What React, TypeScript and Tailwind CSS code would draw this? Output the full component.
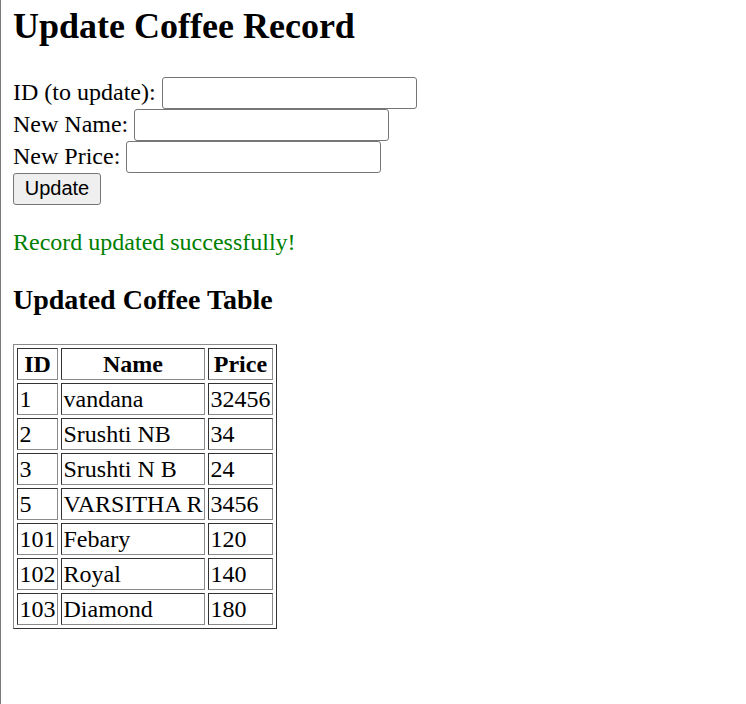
const coffees = [
  { id: 1, name: 'vandana', price: 32456 },
  { id: 2, name: 'Srushti NB', price: 34 },
  { id: 3, name: 'Srushti N B', price: 24 },
  { id: 5, name: 'VARSITHA R', price: 3456 },
  { id: 101, name: 'Febary', price: 120 },
  { id: 102, name: 'Royal', price: 140 },
  { id: 103, name: 'Diamond', price: 180 },
]

const cell = 'border border-t-[#333] border-l-[#333] border-r-[#8a8a8a] border-b-[#8a8a8a] px-[1.5px] py-[1px] leading-[28px] whitespace-nowrap'

export default function App() {
  return (
    <div className="min-h-[704px] border-l border-[#7a7a7a] bg-white pl-[12px] pt-[6px] font-['Liberation_Serif',serif] text-[24px] text-black">
      <h1 className="text-[36px] font-bold leading-[41px]">Update Coffee Record</h1>

      <form className="mt-[30px]" onSubmit={e => e.preventDefault()}>
        <FieldRow label="ID (to update):" />
        <FieldRow label="New Name:" />
        <FieldRow label="New Price:" />
        <button
          type="submit"
          className="flex h-[32px] w-[88px] items-center justify-center rounded-[3px] border border-[#767676] bg-[#efefef] pb-[2px] font-['Liberation_Sans',sans-serif] text-[20px] leading-[23px] text-black"
        >
          Update
        </button>
      </form>

      <p className="mt-[24px] leading-[27px] text-[#008000]">Record updated successfully!</p>

      <h3 className="mt-[28px] text-[28px] font-bold leading-[32px]">Updated Coffee Table</h3>

      <table className="mt-[28px] border-separate border-spacing-[3px] border border-t-[#8a8a8a] border-l-[#8a8a8a] border-r-[#333] border-b-[#333]">
        <thead>
          <tr>
            <th className={cell + ' text-center font-bold'}>ID</th>
            <th className={cell + ' text-center font-bold'}>Name</th>
            <th className={cell + ' text-center font-bold'}>Price</th>
          </tr>
        </thead>
        <tbody>
          {coffees.map(c => (
            <tr key={c.id}>
              <td className={cell}>{c.id}</td>
              <td className={cell}>{c.name}</td>
              <td className={cell}>{c.price}</td>
            </tr>
          ))}
        </tbody>
      </table>
    </div>
  )
}

function FieldRow({ label }: { label: string }) {
  return (
    <div className="flex h-[32px] items-start">
      <span className="leading-[30px] whitespace-pre">{label}</span>
      <input
        type="text"
        className="ml-[6px] h-[32px] w-[255px] rounded-[3px] border border-[#767676] bg-white px-[3px] font-['Liberation_Sans',sans-serif] text-[20px]"
      />
    </div>
  )
}
